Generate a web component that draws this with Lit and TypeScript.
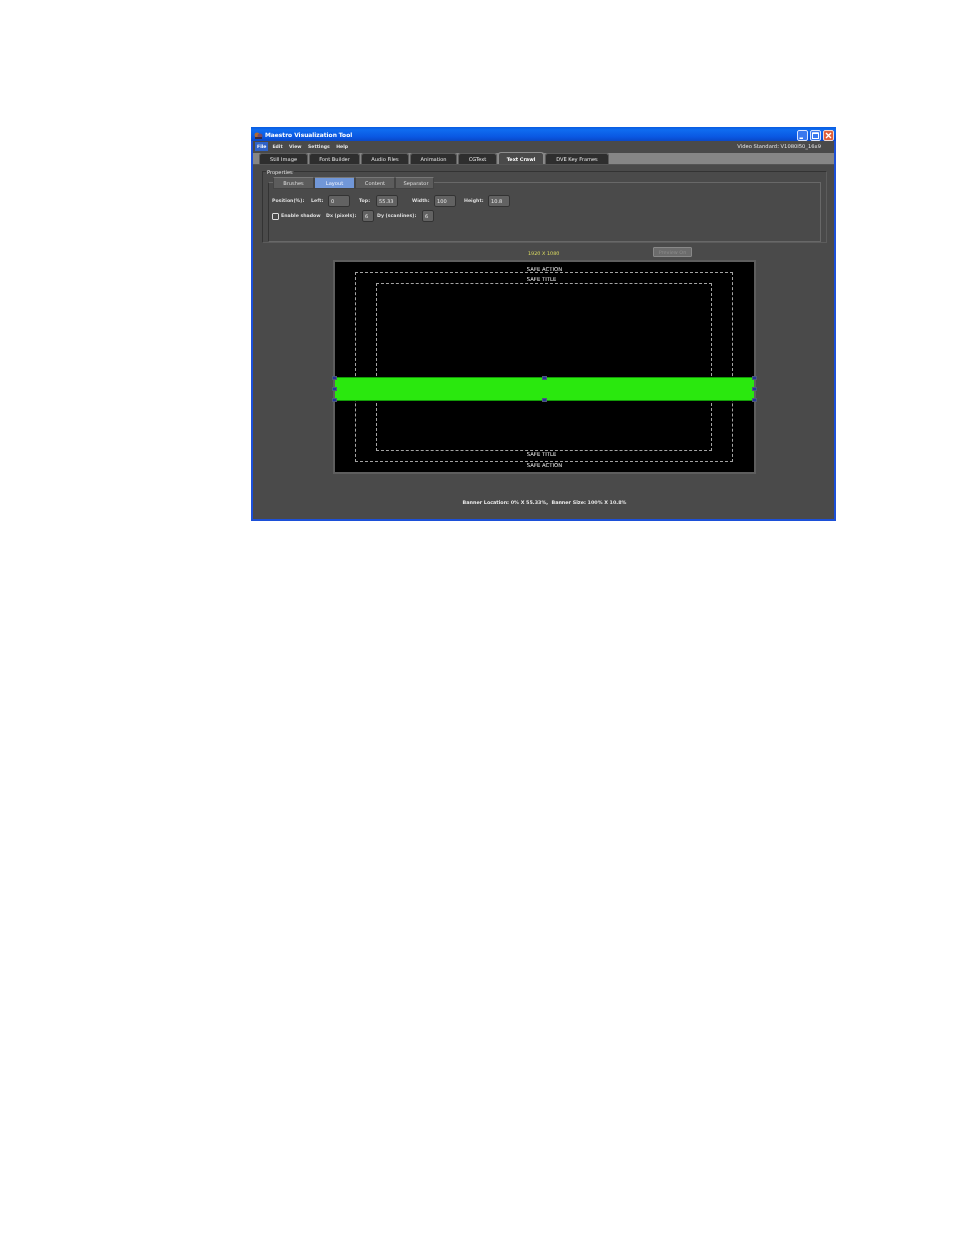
import { LitElement, html, css } from "lit";
import { customElement } from "lit/decorators.js";

@customElement("app-root")
export class AppRoot extends LitElement {
  static styles = css`
    :host { display: block; width: 954px; height: 1235px; background: #fff; overflow: hidden; font-family: "DejaVu Sans", sans-serif; }
    .page { padding: 127px 0 0 251px; }
    .win { width: 585px; height: 394px; box-sizing: border-box; background: #4a4a4a; border: solid #1c50d8; border-width: 0 2px 2px 2px; display: flex; flex-direction: column; color: #e4e4e4; font-size: 5px; font-weight: 400; filter: blur(0.3px); }
    .title { height: 14px; box-sizing: border-box; flex: none; margin: 0 -2px; background: linear-gradient(#0a5ce0, #0f6cf0 20%, #0a58e2 70%, #0a48c8); display: flex; align-items: center; padding: 2px 2px 0 3px; color: #fff; font-size: 5.9px; font-weight: 700; gap: 2px; }
    .title .t { flex: 1; }
    .wb { display: flex; gap: 2px; }
    .wb svg { display: block; }
    .menu { height: 11px; flex: none; display: flex; align-items: center; padding: 0 13px 0 2px; background: #4a4a4a; }
    .menu span { line-height: 9px; font-weight: 700; font-size: 4.6px; margin-right: 6.5px; }
    .menu .on { background: #2f62c8; color: #fff; padding: 0 2px; margin-right: 4px; }
    .menu .vs { margin: 0 0 0 auto; padding: 0; font-weight: 400; font-size: 5.2px; }
    .tabs { height: 13px; flex: none; display: flex; align-items: flex-end; background: linear-gradient(#4a4a4a 1px, #868686 1px); padding-left: 6px; gap: 1px; border-bottom: 1px solid #555; box-sizing: border-box; }
    .tab { height: 11px; box-sizing: border-box; background: #2e2e2e; border: 1px solid #5c5c5c; border-bottom: 0; border-radius: 3px 3px 0 0; display: flex; align-items: center; justify-content: center; color: #e8e8e8; font-size: 5.1px; }
    .tab.on { height: 12px; background: #4a4a4a; border-color: #8c8c8c; color: #fff; font-weight: 700; font-size: 4.9px; }
    .props { margin: 6px 7px 0 9px; height: 72px; box-sizing: border-box; border: 1px solid #333; border-right-color: #5c5c5c; border-bottom-color: #5c5c5c; position: relative; padding: 10px 5px 1px 5px; }
    .legend { position: absolute; left: 3px; top: -3px; background: #4a4a4a; padding: 0 1px; line-height: 6px; font-size: 5.1px; }
    .inner { height: 60px; box-sizing: border-box; border: 1px solid #686868; border-left-color: #333; position: relative; padding: 12px 0 0 3px; }
    .subtabs { position: absolute; left: 4px; top: -6px; display: flex; }
    .st { height: 12px; box-sizing: border-box; background: #5c5c5c; border: 1px solid #444; border-top-color: #777; display: flex; align-items: center; justify-content: center; font-size: 5.1px; color: #ddd; }
    .st.on { background: #7197d8; color: #f4f6ff; }
    .st:last-child { padding-left: 3px; }
    .row { display: flex; align-items: center; height: 12px; }
    .row + .row { margin-top: 3px; }
    .row span { white-space: nowrap; font-weight: 700; font-size: 4.7px; color: #ddd; padding-bottom: 2px; }
    .pad { box-sizing: border-box; }
    .inp { height: 12px; box-sizing: border-box; background: #626262; border: 1px solid #333; border-radius: 2px; font-size: 5.1px; padding-left: 2px; display: flex; align-items: center; font-weight: 400; color: #e4e4e4; flex: none; }
    .check { width: 7px; height: 7px; box-sizing: border-box; border: 1px solid #ddd; border-radius: 1px; background: #4a4a4a; flex: none; margin-right: 2px; }
    .prevbar { position: relative; height: 17px; flex: none; }
    .res { position: absolute; left: 275px; top: 7px; color: #d8d860; font-size: 4.9px; line-height: 6px; }
    .btn { position: absolute; left: 400px; top: 4px; width: 39px; height: 10px; box-sizing: border-box; background: #6c6c6c; border: 1px solid #888; border-radius: 1px; color: #8c8c8c; font-size: 4.9px; display: flex; align-items: center; justify-content: center; }
    .canvas { margin-left: 80px; width: 423px; height: 214px; box-sizing: border-box; border: 2px solid #5e5e5e; background: #000; position: relative; flex: none; }
    .safe { position: absolute; box-sizing: border-box; border: 1px dashed #a4a4a4; }
    .lab { position: absolute; left: 0; right: 0; text-align: center; color: #f0f0f0; font-size: 5.3px; line-height: 6px; }
    .green { position: absolute; left: 0; right: 0; top: 115px; height: 24px; box-sizing: border-box; background: #2ae80e; border: solid #139a08; border-width: 1px 0; }
    .h { position: absolute; width: 5px; height: 4px; box-sizing: border-box; background: #26349c; border: 1px solid #4e5a78; }
    .status { margin-top: 25px; text-align: center; padding-left: 2px; font-size: 4.85px; line-height: 6px; color: #e8e8e8; font-weight: 700; }
  `;

  render() {
    const tabs: [string, number, boolean?][] = [
      ["Still Image", 49], ["Font Builder", 51], ["Audio Files", 48], ["Animation", 47],
      ["CGText", 39], ["Text Crawl", 46, true], ["DVE Key Frames", 64],
    ];
    const sub: [string, number, boolean?][] = [["Brushes", 41], ["Layout", 41, true], ["Content", 40], ["Separator", 39]];
    const handles: [number, number][] = [
      [-3, 114], [-3, 125], [-3, 136], [207, 114], [207, 136], [417, 114], [417, 125], [417, 136],
    ];
    return html`
      <div class="page">
        <div class="win">
          <div class="title">
            <svg width="9" height="9" viewBox="0 0 9 9"><circle cx="3" cy="4" r="2.5" fill="#b06a30"/><circle cx="6" cy="5" r="2.5" fill="#7a4a68"/><rect x="1" y="6" width="7" height="2" fill="#3a2a40"/></svg>
            <span class="t">Maestro Visualization Tool</span>
            <div class="wb">
              <svg width="11" height="11" viewBox="0 0 11 11"><rect x=".5" y=".5" width="10" height="10" rx="1.5" fill="#3a78ee" stroke="#d8e4ff"/><rect x="2.5" y="7.5" width="3.5" height="1.5" fill="#fff"/></svg>
              <svg width="11" height="11" viewBox="0 0 11 11"><rect x=".5" y=".5" width="10" height="10" rx="1.5" fill="#3a78ee" stroke="#d8e4ff"/><rect x="2.5" y="3" width="6" height="5.5" fill="none" stroke="#fff"/><rect x="2.5" y="2.5" width="6" height="1.5" fill="#fff"/></svg>
              <svg width="11" height="11" viewBox="0 0 11 11"><rect x=".5" y=".5" width="10" height="10" rx="1.5" fill="#e0603a" stroke="#f0d8d0"/><path d="M3 3l5 5M8 3l-5 5" stroke="#fff" stroke-width="1.4"/></svg>
            </div>
          </div>
          <div class="menu">
            <span class="on">File</span><span>Edit</span><span>View</span><span>Settings</span><span>Help</span>
            <span class="vs">Video Standard: V1080I50_16x9</span>
          </div>
          <div class="tabs">
            ${tabs.map(([t, w, on]) => html`<div class="tab ${on ? "on" : ""}" style="width:${w}px">${t}</div>`)}
          </div>
          <div class="props">
            <div class="legend">Properties</div>
            <div class="inner">
              <div class="subtabs">
                ${sub.map(([t, w, on]) => html`<div class="st ${on ? "on" : ""}" style="width:${w}px">${t}</div>`)}
              </div>
              <div class="row">
                <span style="width:39px">Position(%):</span><span style="width:17px">Left:</span>
                <div class="inp" style="width:22px">0</div>
                <span class="pad" style="width:26px;padding-left:9px">Top:</span>
                <div class="inp" style="width:22px">55.33</div>
                <span class="pad" style="width:36px;padding-left:14px">Width:</span>
                <div class="inp" style="width:22px">100</div>
                <span class="pad" style="width:32px;padding-left:8px">Height:</span>
                <div class="inp" style="width:22px">10.8</div>
              </div>
              <div class="row">
                <div class="check"></div>
                <span style="width:45px">Enable shadow</span>
                <span style="width:36px">Dx (pixels):</span>
                <div class="inp" style="width:12px">6</div>
                <span class="pad" style="width:48px;padding-left:3px">Dy (scanlines):</span>
                <div class="inp" style="width:12px">6</div>
              </div>
            </div>
          </div>
          <div class="prevbar">
            <div class="res">1920 X 1080</div>
            <div class="btn">Preview On</div>
          </div>
          <div class="canvas">
            <div class="safe" style="left:20px;top:10px;width:378px;height:190px"></div>
            <div class="safe" style="left:41px;top:21px;width:336px;height:168px"></div>
            <div class="lab" style="top:4px">SAFE ACTION</div>
            <div class="lab" style="top:14px;padding-right:6px">SAFE TITLE</div>
            <div class="lab" style="top:189px;padding-right:6px">SAFE TITLE</div>
            <div class="lab" style="top:200px">SAFE ACTION</div>
            <div class="green"></div>
            ${handles.map(([x, y]) => html`<div class="h" style="left:${x}px;top:${y}px"></div>`)}
          </div>
          <div class="status">Banner Location: 0% X 55.33%,&nbsp; Banner Size: 100% X 10.8%</div>
        </div>
      </div>
    `;
  }
}
